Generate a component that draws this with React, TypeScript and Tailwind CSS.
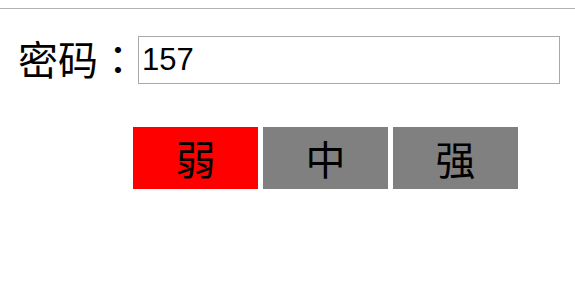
import React from "react";

export default function App() {
  return (
    <div className="w-[575px] h-[291px] bg-white overflow-hidden">
      <div className="h-2" />
      <div className="border-t border-[#b3b3b3]" />
      <div className="mt-[27px] flex items-center pl-[18px]">
        <span
          className="text-[40px] leading-none text-black mb-[4px]"
          style={{ fontFamily: '"Noto Sans CJK SC", sans-serif' }}
        >
          密码<span style={{ fontFamily: '"Noto Sans CJK TC", sans-serif' }}>：</span>
        </span>
        <input
          defaultValue="157"
          className="w-[422px] h-[48px] border border-[#a9a9a9] pl-[3px] text-[31px] text-black outline-none"
          style={{ fontFamily: '"Liberation Sans", Arial, sans-serif' }}
        />
      </div>
      <div
        className="mt-[43px] flex gap-[5px] pl-[133px]"
        style={{ fontFamily: '"Noto Sans CJK SC", sans-serif' }}
      >
        <div className="w-[125px] h-[62px] bg-[#ff0000] flex items-center justify-center text-[40px] leading-none text-black">
          弱
        </div>
        <div className="w-[125px] h-[62px] bg-[#808080] flex items-center justify-center text-[40px] leading-none text-black">
          中
        </div>
        <div className="w-[125px] h-[62px] bg-[#808080] flex items-center justify-center text-[40px] leading-none text-black">
          强
        </div>
      </div>
    </div>
  );
}
